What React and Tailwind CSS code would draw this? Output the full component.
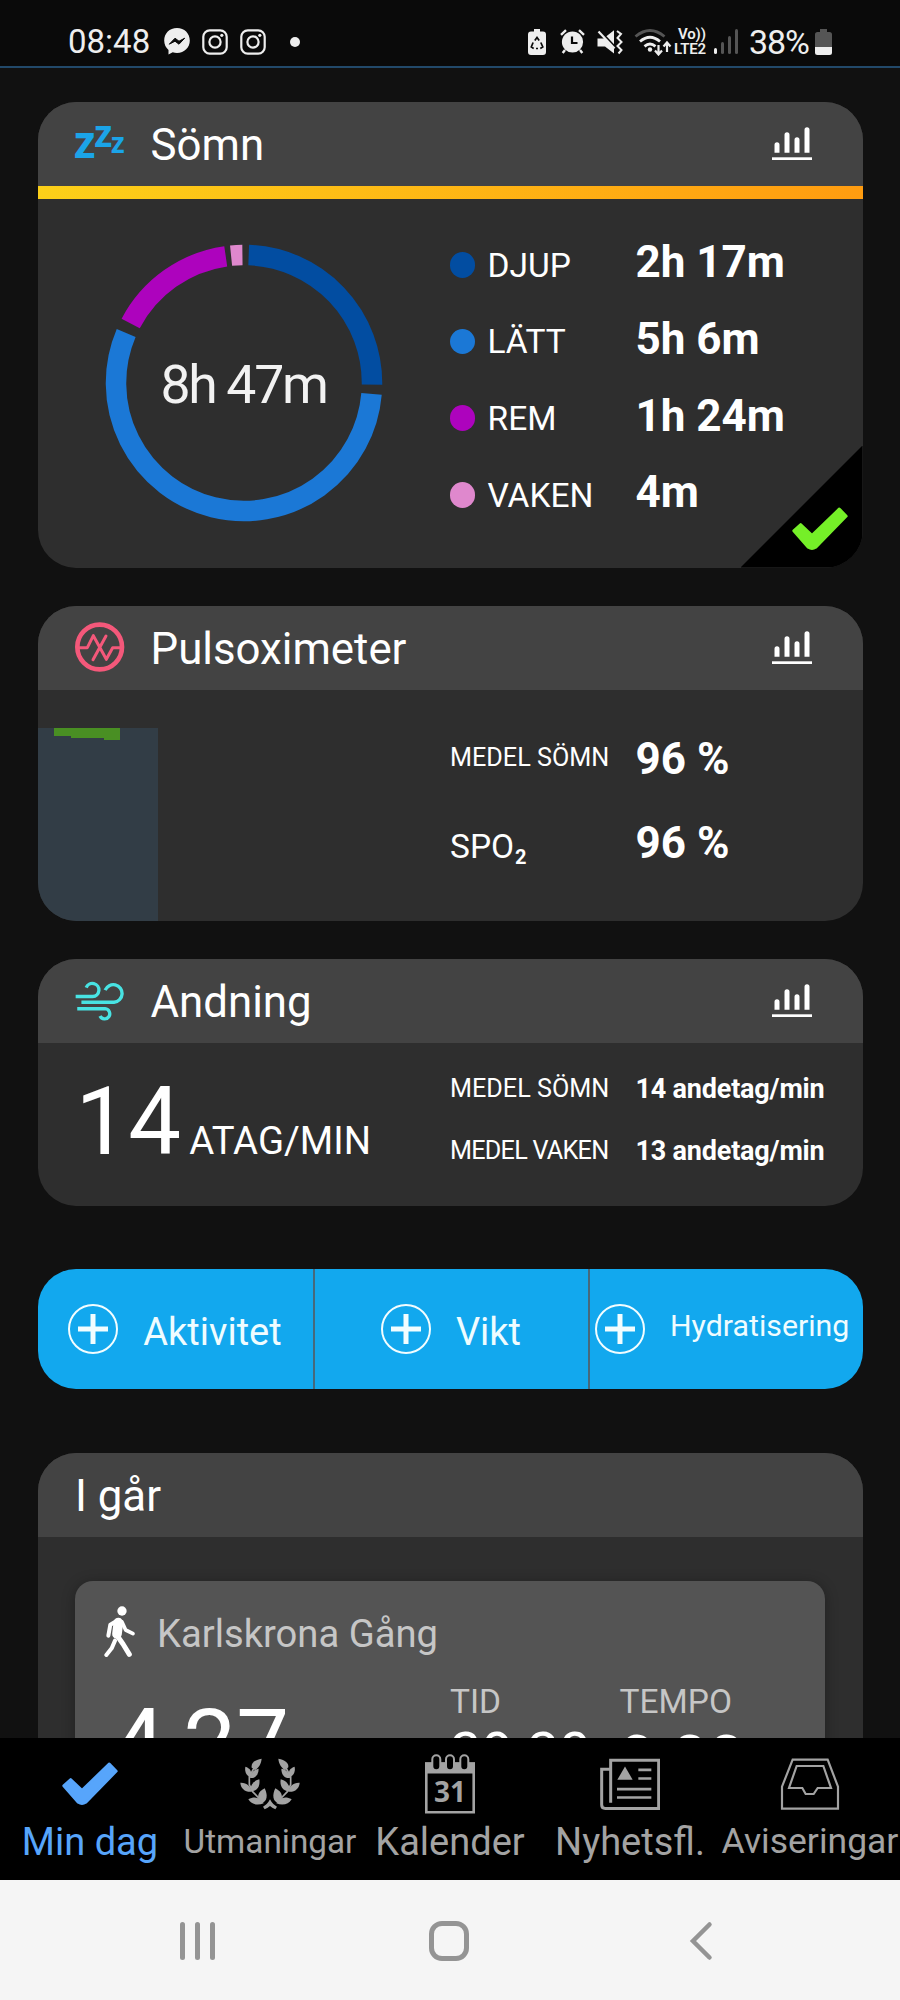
import React from 'react';
import clsx from 'clsx';

const sleepStages = [
  { name: 'DJUP', value: '2h 17m', color: '#024da1', from: 2.1, to: 90.7 },
  { name: 'LÄTT', value: '5h 6m', color: '#1b78d6', from: 94.9, to: 293 },
  { name: 'REM', value: '1h 24m', color: '#ad03bd', from: 297.7, to: 351.8 },
  { name: 'VAKEN', value: '4m', color: '#df88cd', from: 354.2, to: 359.3 }
];

const point = (angle, r) => {
  const rad = ((angle - 90) * Math.PI) / 180;
  return `${139 + r * Math.cos(rad)} ${139 + r * Math.sin(rad)}`;
};

const arc = (from, to, r) => `M${point(from, r)} A${r} ${r} 0 ${to - from > 180 ? 1 : 0} 1 ${point(to, r)}`;

const ChartIcon = () => (
  <svg width="40" height="33" viewBox="0 0 40 33" fill="#fff">
    <path d="M2.5 25.7v-8a2.5 2.5 0 0 1 5 0v8zM12.500 25.700v-18a2.500 2.500 0 0 1 5 0v18zM22.500 25.700v-13a2.500 2.500 0 0 1 5 0v13zM32.500 25.700v-23a2.500 2.500 0 0 1 5 0v23z" />
    <rect y="30.300" width="40" height="2.700" />
  </svg>
);

const SleepIcon = () => (
  <div className="flex items-start font-['Open_Sans'] font-bold leading-none text-[#1ba4e8] -mt-[10px]">
    <span className="text-[44px] -ml-[1px] mt-[5px] tracking-[-1.300px]">z</span>
    <span className="text-[37px] tracking-[-1.300px]">z</span>
    <span className="text-[28px] mt-[14px]">z</span>
  </div>
);

const PulseIcon = () => (
  <svg width="50" height="50" viewBox="0 0 150 150" fill="none" stroke="#f4587a" className="-mt-[2px]">
    <circle cx="74" cy="75" r="67" strokeWidth="14" />
    <path d="M10 77h27l18-36 39 71 19-35h27M93 42l-39 71" strokeWidth="9" strokeLinejoin="round" strokeLinecap="round" />
  </svg>
);

const WindIcon = () => (
  <svg width="52" height="42" viewBox="223 122 156 126" fill="none" stroke="#48e3e3" strokeWidth="10.500">
    <path d="M225 171h53a20.500 20.500 0 1 0-20-28M243 189h102a27.500 27.500 0 1 0-28-38M230 209h87a16 16 0 1 1-16 23" />
  </svg>
);

const CheckIcon = ({ className }) => (
  <svg width="56" height="44" viewBox="-1 -1 168 131" fill="currentColor" stroke="currentColor" strokeWidth="8" strokeLinejoin="round" className={className}>
    <path d="M4 70 25 51 59 83 141 4 162 26 70 120Q59 127 48 120z" />
  </svg>
);

const PlusIcon = () => (
  <svg width="50" height="50" viewBox="0 0 50 50" fill="none" stroke="#f2fdff" className="shrink-0">
    <circle cx="25" cy="25" r="24" strokeWidth="2" />
    <path d="M25 10v30M10 25h30" strokeWidth="5" />
  </svg>
);

const WalkIcon = () => (
  <svg width="32" height="52" viewBox="314 528 96 156" fill="none" stroke="#fff" strokeLinecap="round" strokeLinejoin="round">
    <circle cx="368" cy="543" r="14" fill="#fff" stroke="none" />
    <path d="M353 572 333 584 327 617" strokeWidth="12" />
    <path d="M357 578 353 612" strokeWidth="29" />
    <path d="M368 576 379 600 401 611" strokeWidth="11" />
    <path d="M352 615 371 642 390 673" strokeWidth="15" />
    <path d="M347 632 337 655 321 675" strokeWidth="12" />
  </svg>
);

const LaurelIcon = () => (
  <svg width="62" height="52" viewBox="717 82 186 156">
    <defs>
      <g id="branch" fill="#a3a3a3">
        <path d="M785 84C764 87 753 98 755 110L765 119C777 110 783 100 785 84z" />
        <path d="M736 108C750 112 756 122 755 139 741 138 733 126 736 108z" />
        <path d="M776 114C762 116 751 126 750 142 766 144 776 132 776 114z" />
        <path d="M721 156C740 155 752 166 755 183 736 185 722 174 721 156z" />
        <path d="M778 146C759 151 748 166 753 182 772 182 781 166 778 146z" />
        <path d="M745 206C764 195 782 201 791 218 772 226 754 221 745 206z" />
        <path d="M794 173C773 184 767 201 785 218 802 212 804 193 794 173z" />
        <path d="M762 112 748 138V162L758 183 782 208" fill="none" stroke="#a3a3a3" strokeWidth="5" />
        <path d="M810 206Q802 222 789 228L794 236Q804 232 810 226z" />
      </g>
    </defs>
    <use href="#branch" />
    <use href="#branch" transform="matrix(-1 0 0 1 1620 0)" />
  </svg>
);

const CalendarIcon = () => (
  <svg width="50" height="60" viewBox="0 0 50 60">
    <path d="M1.300 9.500h47.400v48.700H1.300z" fill="none" stroke="#a3a3a3" strokeWidth="2.600" />
    <path d="M0 8.500h50v11H0z" fill="#a3a3a3" />
    {[11.3, 25, 39.300].map((x) => (
      <rect key={x} x={x - 4} y="1.200" width="8" height="15" rx="4" fill="#000" stroke="#a3a3a3" strokeWidth="2" />
    ))}
    <text x="25" y="48" textAnchor="middle" fontSize="28" fontWeight="700" fill="#a3a3a3" className="font-['Open_Sans']">31</text>
  </svg>
);

const NewsIcon = () => (
  <svg width="60" height="53" viewBox="450 84 180 158" fill="none" stroke="#a3a3a3" strokeWidth="9">
    <path d="M482 218V90h144v145H466Q455 235 455 224V117h27" />
    <path d="M565 119h39M565 145h39M501 177h103M501 202h103" strokeWidth="8" />
    <path d="M525 109 502 149h46z" fill="#a3a3a3" stroke="none" />
  </svg>
);

const InboxIcon = () => (
  <svg width="60" height="52" viewBox="990 86 180 156" fill="none" stroke="#a3a3a3" strokeWidth="6.500">
    <path d="M1028 91h105l31 81v66H996v-66z" />
    <path d="M1040 110h80l23 66h-40l-12 18h-24l-10-18h-40z" />
  </svg>
);

const InstagramIcon = () => (
  <svg width="26" height="26" viewBox="0 0 26 26" fill="none" stroke="#eee" strokeWidth="2.200">
    <rect x="1.300" y="1.300" width="23.400" height="23.400" rx="6.500" />
    <circle cx="13" cy="13" r="5.600" />
    <circle cx="19.800" cy="6.300" r="1.600" fill="#eee" stroke="none" />
  </svg>
);

const StatusBar = () => (
  <div className="flex h-[68px] shrink-0 items-center border-b-2 border-[#22496a] bg-[#0a0a0a] pl-[68px] pr-[68px] pt-[17px] text-[#eee]">
    <span className="w-[96px] text-[33px] leading-none">08:48</span>
    <svg width="26" height="27" viewBox="0 0 26 27">
      <path d="M13 0C5.500 0 .2 5.300.2 12.500c0 4 1.700 7.200 4.300 9.500v4.500l4.200-2.200c1.300.4 2.800.6 4.300.6 7.400 0 12.800-5.300 12.800-12.400S20.400 0 13 0z" fill="#eee" />
      <path d="m5.300 16.200 5.700-6 4 3 5.700-3-5.700 6-4-3z" fill="#0a0a0a" stroke="#0a0a0a" strokeLinejoin="round" />
    </svg>
    <div className="ml-[12px] flex gap-[12px]">
      <InstagramIcon />
      <InstagramIcon />
    </div>
    <span className="ml-[24px] h-[10px] w-[10px] rounded-full bg-[#eee]" />

    <div className="ml-auto flex items-center">
      <svg width="18" height="26" viewBox="0 0 18 26">
        <path d="M6 0h6v2.500h3a3 3 0 0 1 3 3V23a3 3 0 0 1-3 3H3a3 3 0 0 1-3-3V5.500a3 3 0 0 1 3-3h3z" fill="#eee" />
        <path d="m6.800 11.500 2.200-3 2.200 3M12.800 13.500l2 4.500-2.500 1.500M10 19.500H8M5.700 19.500 3.300 18l1.800-4.500" fill="none" stroke="#0a0a0a" strokeWidth="1.700" />
      </svg>
      <svg width="25" height="25" viewBox="0 0 25 25" className="ml-[14px]">
        <circle cx="12.500" cy="13" r="10.600" fill="#eee" />
        <path d="M12 7.500v6.500h5.500" fill="none" stroke="#0a0a0a" strokeWidth="2.200" />
        <path d="M1 5.800 6 1.200M24 5.800 19 1.200M5 21l-2.300 3M20 21l2.300 3" stroke="#eee" strokeWidth="2.400" />
      </svg>
      <svg width="26" height="26" viewBox="0 0 26 26" className="ml-[12px]">
        <path d="M.5 9.500h6L17 1.200v23.300l-9-7H.5z" fill="#eee" />
        <path d="m1.500 1 17 18" stroke="#0a0a0a" strokeWidth="3" />
        <path d="m1.500 2.500 16 17" stroke="#eee" strokeWidth="2.200" />
        <path d="m20 2 4 3-3.500 4 4 4-4 4 4 4-3 3.500" fill="none" stroke="#eee" strokeWidth="2" />
      </svg>
      <svg width="38" height="28" viewBox="0 0 38 28" fill="none" strokeWidth="2.800" className="ml-[11px]">
        <path d="M1.500 8.500q14.500-12 29 0" stroke="#555" />
        <path d="M6 13.500q10-8.500 20 0M10.500 18.300q5.500-4.500 11 0" stroke="#eee" />
        <circle cx="16" cy="21.500" r="2.200" fill="#eee" />
        <path d="M24.500 17v9M21 22.500l3.500 4 3.500-4M33 24v-9M29.500 18.500l3.500-4 3.500 4" stroke="#eee" strokeWidth="2.200" />
      </svg>
      <div className="ml-[2px] flex w-[35px] flex-col text-[15px] font-semibold leading-[14.500px] tracking-[-0.1px]">
        <span className="pl-[4px]">Vo))</span>
        <span>LTE2</span>
      </div>
      <div className="ml-[5px] flex items-end gap-[4px]">
        <span className="h-[6px] w-[3px] rounded-full bg-[#eee]" />
        <span className="h-[12px] w-[3px] rounded-full bg-[#555]" />
        <span className="h-[18px] w-[3px] rounded-full bg-[#555]" />
        <span className="h-[25px] w-[3px] rounded-full bg-[#555]" />
      </div>
      <span className="ml-[11px] text-[34px] leading-none tracking-[-1px]">38%</span>
      <svg width="17" height="26" viewBox="0 0 17 26" className="ml-[6px]">
        <path d="M5 0h7v3h2.500A2.500 2.500 0 0 1 17 5.500V18H0V5.500A2.500 2.500 0 0 1 2.500 3H5z" fill="#555" />
        <path d="M0 18h17v5.500a2.500 2.500 0 0 1-2.500 2.500h-12A2.500 2.500 0 0 1 0 23.500z" fill="#eee" />
      </svg>
    </div>
  </div>
);

const CardHeader = ({ icon, title, chart = true }) => (
  <div className="flex h-[84px] items-center bg-[#434343] pl-[37.500px] pr-[51px]">
    {icon && <div className="mr-[25.500px] flex w-[50px]">{icon}</div>}
    <h2 className="pt-[5px] text-[43.800px] leading-none">{title}</h2>
    {chart && <div className="ml-auto"><ChartIcon /></div>}
  </div>
);

const SleepCard = () => (
  <section className="relative h-[466px] shrink-0 overflow-hidden rounded-[38px] bg-[#2e2e2e]">
    <CardHeader icon={<SleepIcon />} title="Sömn" />
    <div className="h-[13px] bg-linear-to-r from-[#fcd019] to-[#ff9c10]" />
    <div className="flex">
      <svg width="278" height="278" viewBox="0 0 278 278" fill="none" className="ml-[67.500px] mt-[45px]">
        {sleepStages.map((stage) => (
          <path key={stage.name} d={arc(stage.from, stage.to, 128)} stroke={stage.color} strokeWidth="20.500" />
        ))}
        <text x="138.500" y="158.500" textAnchor="middle" fontSize="53.500" letterSpacing="-2.300" fill="#f2f2f2">8h 47m</text>
      </svg>
      <ul className="ml-[66.500px] pt-[28px]">
        {sleepStages.map((stage) => (
          <li key={stage.name} className="flex h-[76.700px] items-center">
            <span className="h-[25.500px] w-[25.500px] rounded-full" style={{ backgroundColor: stage.color }} />
            <span className="ml-[12.500px] w-[148px] pt-[1px] text-[33.500px] leading-none">{stage.name}</span>
            <span className="pb-[5px] text-[44px] font-bold leading-none">{stage.value}</span>
          </li>
        ))}
      </ul>
    </div>
    <div className="absolute bottom-0 right-0 h-[122px] w-[122px] bg-black [clip-path:polygon(100%_0,100%_100%,0_100%)]">
      <CheckIcon className="absolute bottom-[17px] right-[14.500px] text-[#75ef28]" />
    </div>
  </section>
);

const PulseCard = () => (
  <section className="mt-[38px] h-[315px] shrink-0 overflow-hidden rounded-[38px] bg-[#2e2e2e]">
    <CardHeader icon={<PulseIcon />} title="Pulsoximeter" />
    <div className="flex h-[231px]">
      <div className="mt-[38px] flex w-[120px] items-start bg-[#323d46] pl-[16px]">
        <span className="h-[8px] w-[17px] bg-[#498f23]" />
        <span className="h-[10px] w-[33px] bg-[#498f23]" />
        <span className="h-[12px] w-[16px] bg-[#498f23]" />
      </div>
      <div className="ml-[292.500px] pt-[26px]">
        <div className="flex h-[84px] items-center">
          <span className="w-[185.500px] text-[25.200px] leading-none">MEDEL SÖMN</span>
          <span className="pt-[3px] text-[44px] font-bold leading-none">96 %</span>
        </div>
        <div className="flex h-[84px] items-center">
          <span className="w-[185.500px] pt-[10px] text-[33.500px] leading-none">
            SPO<span className="relative top-[6px] ml-[1px] text-[20px] font-bold">2</span>
          </span>
          <span className="pt-[3px] text-[44px] font-bold leading-none">96 %</span>
        </div>
      </div>
    </div>
  </section>
);

const BreathingCard = () => (
  <section className="mt-[38px] h-[247px] shrink-0 overflow-hidden rounded-[38px] bg-[#2e2e2e]">
    <CardHeader icon={<WindIcon />} title="Andning" />
    <div className="flex">
      <div className="flex w-[412.500px] items-baseline pl-[38px] pt-[32.500px]">
        <span className="text-[94px] leading-none">14</span>
        <span className="ml-[8px] text-[38.300px] leading-none">ATAG/MIN</span>
      </div>
      <div className="pt-[15.500px]">
        <div className="flex h-[61.700px] items-center">
          <span className="w-[185.500px] text-[25.200px] leading-none">MEDEL SÖMN</span>
          <span className="pt-[1px] text-[27px] font-bold leading-none tracking-[-0.2px]">14 andetag/min</span>
        </div>
        <div className="flex h-[61.700px] items-center">
          <span className="w-[185.500px] text-[25.200px] leading-none tracking-[-0.75px]">MEDEL VAKEN</span>
          <span className="pt-[1px] text-[27px] font-bold leading-none tracking-[-0.2px]">13 andetag/min</span>
        </div>
      </div>
    </div>
  </section>
);

const QuickActions = () => (
  <div className="mt-[63.500px] grid h-[120px] shrink-0 grid-cols-[277px_275px_1fr] overflow-hidden rounded-[38px] bg-[#12a8ee] text-[#effcff]">
    <button className="flex items-center justify-center gap-[25px] border-r-2 border-[#46697c]">
      <PlusIcon />
      <span className="pt-[5px] text-[38px] leading-none">Aktivitet</span>
    </button>
    <button className="flex items-center justify-center gap-[25px] border-r-2 border-[#46697c]">
      <PlusIcon />
      <span className="pt-[5px] text-[38px] leading-none">Vikt</span>
    </button>
    <button className="flex items-center gap-[25px] pl-[5.500px]">
      <PlusIcon />
      <span className="pb-[5px] text-[30.300px] leading-none">Hydratisering</span>
    </button>
  </div>
);

const YesterdayCard = () => (
  <section className="mt-[63.500px] h-[340px] shrink-0 rounded-t-[38px] bg-[#2e2e2e] overflow-hidden">
    <CardHeader title="I går" chart={false} />
    <div className="mx-[37.500px] mt-[44.500px] h-[260px] rounded-t-[18px] bg-[#545454] shadow-[0_2px_14px_rgba(0,0,0,0.3)]">
      <div className="flex h-[101px] items-center pl-[29px]">
        <WalkIcon />
        <span className="ml-[21px] pt-[5px] text-[38.200px] leading-none text-[#c6c6c6]">Karlskrona Gång</span>
      </div>
      <div className="flex pl-[37px]">
        <span className="w-[338px] pt-[15px] text-[94px] leading-none">4,27</span>
        <div className="flex w-[169.500px] flex-col pt-[3px]">
          <span className="text-[33.500px] leading-none text-[#c6c6c6]">TID</span>
          <span className="pt-[7px] text-[56.500px] leading-none">39:20</span>
        </div>
        <div className="flex flex-col pt-[3px]">
          <span className="text-[33.500px] leading-none text-[#c6c6c6]">TEMPO</span>
          <span className="pt-[8px] text-[65px] leading-none">9:00</span>
        </div>
      </div>
    </div>
  </section>
);

const tabs = [
  { name: 'Min dag', icon: CheckIcon, size: 'text-[38px]', active: true },
  { name: 'Utmaningar', icon: LaurelIcon, size: 'text-[33.300px]' },
  { name: 'Kalender', icon: CalendarIcon, size: 'text-[38px]' },
  { name: 'Nyhetsfl.', icon: NewsIcon, size: 'text-[38px]' },
  { name: 'Aviseringar', icon: InboxIcon, size: 'text-[35.500px]' }
];

const TabBar = () => (
  <nav className="grid h-[142px] shrink-0 grid-cols-5 bg-black">
    {tabs.map((tab) => {
      const Icon = tab.icon;
      return (
        <button
          key={tab.name}
          className={clsx('flex flex-col items-center pt-[14px]', tab.active ? 'text-[#57a5fb]' : 'text-[#a3a3a3]')}
        >
          <span className="flex h-[64px] items-center"><Icon /></span>
          <span className={clsx('flex h-[51px] items-center whitespace-nowrap leading-none', tab.size)}>{tab.name}</span>
        </button>
      );
    })}
  </nav>
);

const SystemNav = () => (
  <div className="flex h-[120px] shrink-0 items-center bg-[#f5f5f5] pl-[180px] pt-[2px]">
    <div className="flex gap-[10px]">
      <span className="h-[38px] w-[5px] rounded-full bg-[#949494]" />
      <span className="h-[38px] w-[5px] rounded-full bg-[#949494]" />
      <span className="h-[38px] w-[5px] rounded-full bg-[#949494]" />
    </div>
    <span className="ml-[214px] h-[40px] w-[40px] rounded-[13px] border-[5px] border-[#949494]" />
    <svg width="24" height="40" viewBox="0 0 24 40" fill="none" stroke="#949494" strokeWidth="4.500" strokeLinecap="round" className="ml-[220px]">
      <path d="M20.500 3.500 4 20l16.500 16.500" />
    </svg>
  </div>
);

const App = () => {
  return (
    <div className="flex h-[2000px] w-[900px] flex-col overflow-hidden bg-[#111] font-[Roboto,sans-serif] text-white">
      <StatusBar />
      <main className="flex h-[1670px] shrink-0 flex-col overflow-hidden px-[37.500px] pt-[33.500px]">
        <SleepCard />
        <PulseCard />
        <BreathingCard />
        <QuickActions />
        <YesterdayCard />
      </main>
      <TabBar />
      <SystemNav />
    </div>
  );
};

export default App;
